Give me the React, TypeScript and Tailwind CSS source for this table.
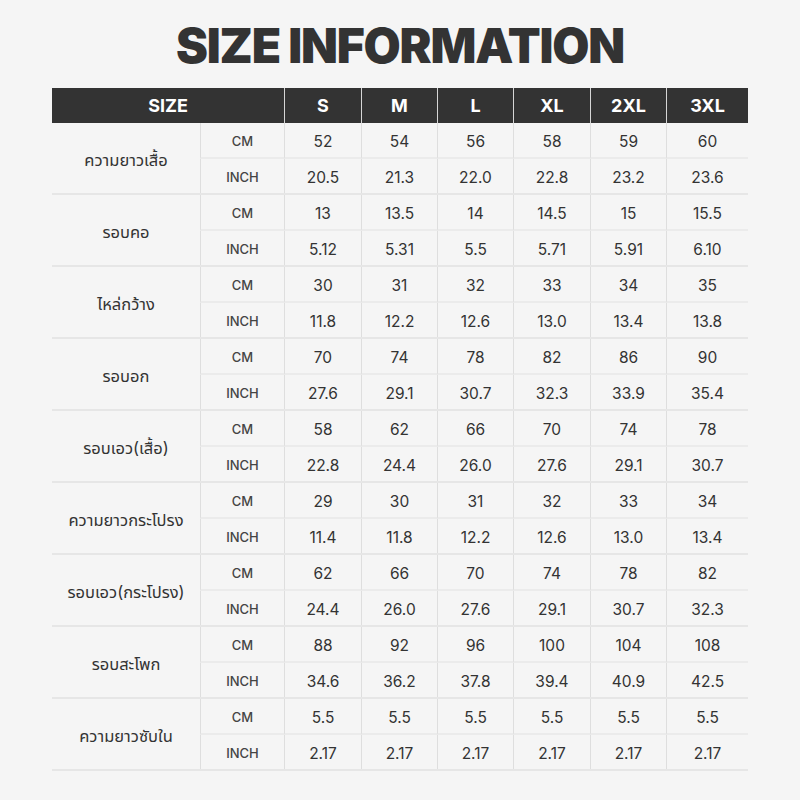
import React from "react"

const sizes = ["S", "M", "L", "XL", "2XL", "3XL"]

const rows = [
  { label: "ความยาวเสื้อ", cm: ["52", "54", "56", "58", "59", "60"], inch: ["20.5", "21.3", "22.0", "22.8", "23.2", "23.6"] },
  { label: "รอบคอ", cm: ["13", "13.5", "14", "14.5", "15", "15.5"], inch: ["5.12", "5.31", "5.5", "5.71", "5.91", "6.10"] },
  { label: "ไหล่กว้าง", cm: ["30", "31", "32", "33", "34", "35"], inch: ["11.8", "12.2", "12.6", "13.0", "13.4", "13.8"] },
  { label: "รอบอก", cm: ["70", "74", "78", "82", "86", "90"], inch: ["27.6", "29.1", "30.7", "32.3", "33.9", "35.4"] },
  { label: "รอบเอว(เสื้อ)", cm: ["58", "62", "66", "70", "74", "78"], inch: ["22.8", "24.4", "26.0", "27.6", "29.1", "30.7"] },
  { label: "ความยาวกระโปรง", cm: ["29", "30", "31", "32", "33", "34"], inch: ["11.4", "11.8", "12.2", "12.6", "13.0", "13.4"] },
  { label: "รอบเอว(กระโปรง)", cm: ["62", "66", "70", "74", "78", "82"], inch: ["24.4", "26.0", "27.6", "29.1", "30.7", "32.3"] },
  { label: "รอบสะโพก", cm: ["88", "92", "96", "100", "104", "108"], inch: ["34.6", "36.2", "37.8", "39.4", "40.9", "42.5"] },
  { label: "ความยาวซับใน", cm: ["5.5", "5.5", "5.5", "5.5", "5.5", "5.5"], inch: ["2.17", "2.17", "2.17", "2.17", "2.17", "2.17"] },
]

const cols = "grid grid-cols-[148px_84px_77px_76px_76px_77px_76px_82px]"

function UnitRow({ unit, values, last }: { unit: string; values: string[]; last?: boolean }) {
  // the group's own bottom border adds 2px under the INCH row
  const cell = last ? "h-[34px] pt-[4px]" : "h-[36px] pt-[4px] border-b-2 border-b-[#ebebeb]"
  return (
    <>
      <div className={`${cell} flex items-center justify-center border-l border-l-[#dedede] text-[13px] font-medium text-[#444]`}>
        {unit}
      </div>
      {values.map((v, i) => (
        <div
          key={i}
          className={`${cell} flex items-center justify-center border-l border-l-[#dedede] text-[15.5px] text-[#333]`}
        >
          {v}
        </div>
      ))}
    </>
  )
}

export default function App() {
  return (
    <div className="w-[800px] h-[800px] bg-[#f5f5f5] font-['Inter','Noto_Sans','Noto_Sans_Thai',sans-serif] text-[#333]">
      <h1 className="pt-[18px] h-[88px] text-center text-[48px] leading-[56px] font-black tracking-tight text-[#333]">
        SIZE INFORMATION
      </h1>
      <div className="mx-[52px] w-[696px]">
        <div className={`${cols} h-[35px] bg-[#333] text-white text-[18px] font-bold`}>
          <div className="col-span-2 flex items-center justify-center">SIZE</div>
          {sizes.map((s) => (
            <div key={s} className="flex items-center justify-center border-l border-white/80">
              {s}
            </div>
          ))}
        </div>
        {rows.map((r) => (
          <div key={r.label} className={`${cols} border-b-2 border-[#e6e6e6]`}>
            <div className="row-span-2 pt-[4px] flex items-center justify-center text-[16.5px] text-[#333]">{r.label}</div>
            <UnitRow unit="CM" values={r.cm} />
            <UnitRow unit="INCH" values={r.inch} last />
          </div>
        ))}
      </div>
    </div>
  )
}
